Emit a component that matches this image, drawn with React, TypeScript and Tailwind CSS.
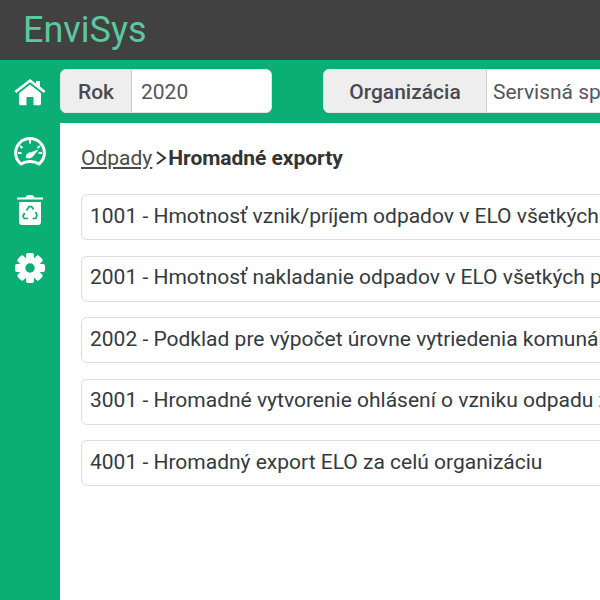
import React from "react";

const rows = [
  "1001 - Hmotnosť vznik/príjem odpadov v ELO všetkých prevádzok",
  "2001 - Hmotnosť nakladanie odpadov v ELO všetkých prevádzok",
  "2002 - Podklad pre výpočet úrovne vytriedenia komunálneho odpadu",
  "3001 - Hromadné vytvorenie ohlásení o vzniku odpadu za prevádzky",
  "4001 - Hromadný export ELO za celú organizáciu",
];

function Home() {
  return (
    <svg width="32" height="28" viewBox="0 0 32 28" fill="#fff">
      <path d="M16 1 L22 5.6 V3 H26 V8.6 L31.5 13 L29.8 15 L16 4.2 L2.2 15 L.5 13 Z" />
      <path d="M16 6.6 L27 15.2 V25.5 C27 26.6 26.2 27.3 25 27.3 H19.5 V19 H12.5 V27.3 H7 C5.8 27.3 5 26.6 5 25.5 V15.2 Z" />
    </svg>
  );
}

function Gauge() {
  return (
    <svg width="32" height="30" viewBox="0 0 32 30" fill="none" stroke="#fff">
      <path d="M7 27 C3.5 24 1.6 20.5 1.6 16 C1.6 8 8 1.6 16 1.6 C24 1.6 30.4 8 30.4 16 C30.4 20.5 28.5 24 25 27 C22.5 25.4 19.5 24.6 16 24.6 C12.5 24.6 9.5 25.4 7 27 Z" strokeWidth="3" strokeLinejoin="round" />
      <path d="M16 3 V6.5 M6 9 L8.6 11 M26 9 L23.4 11 M4 16 H7.5 M24.5 16 H28" strokeWidth="2" />
      <path d="M12 20 C12 17 14.5 15.5 17 15.5 L24 13 L19 19 C18.6 21 12 22 12 20 Z" fill="#fff" strokeWidth="0.5" strokeLinejoin="round" />
    </svg>
  );
}

function Bin() {
  return (
    <svg width="28" height="32" viewBox="0 0 28 32" fill="#fff">
      <path d="M1 3.4 H9.5 C10 1.6 11.5 1 14 1 C16.5 1 18 1.6 18.5 3.4 H27 V5.6 H1 Z" />
      <path d="M3 8 H25 V28 C25 29.8 23.8 31 22 31 H6 C4.2 31 3 29.8 3 28 Z" />
      <g fill="none" stroke="#0bae75" strokeWidth="1.7">
        <path d="M10.5 16.5 L13 12.6 H15.6 L17.5 15.5" />
        <path d="M19.6 18 L21 21.5 L19.6 24.5 H16.5" />
        <path d="M12 24.5 H8.2 L7 22 L8.6 19" />
      </g>
    </svg>
  );
}

function Gear() {
  return (
    <svg width="32" height="32" viewBox="0 0 32 32">
      <g fill="#fff">
        <circle cx="16" cy="16" r="10.5" />
        <rect x="12" y="1" width="8" height="30" rx="2" />
        <rect x="12" y="1" width="8" height="30" rx="2" transform="rotate(45 16 16)" />
        <rect x="12" y="1" width="8" height="30" rx="2" transform="rotate(90 16 16)" />
        <rect x="12" y="1" width="8" height="30" rx="2" transform="rotate(135 16 16)" />
      </g>
      <circle cx="16" cy="16" r="4.7" fill="#0bae75" />
    </svg>
  );
}

function Group({ label, value, labelClass, valueClass }: { label: string; value: string; labelClass: string; valueClass: string }) {
  return (
    <div className="flex h-[44px] shrink-0 rounded-[6px] overflow-hidden bg-white border border-[#e4e4e4]">
      <div className={`flex items-center justify-center bg-[#eeeeee] border-r border-[#cccccc] pt-[3px] font-medium text-[#4a4a50] text-[21px] ${labelClass}`}>{label}</div>
      <div className={`flex items-center bg-white pt-[3px] text-[#55555c] whitespace-nowrap text-[21px] ${valueClass}`}>{value}</div>
    </div>
  );
}

export default function App() {
  return (
    <div className="w-[600px] h-[600px] overflow-hidden flex flex-col bg-white font-['Roboto',sans-serif]">
      <header className="h-[60px] shrink-0 bg-[#414141] flex items-center pl-[23px]">
        <span className="text-[36px] leading-none text-[#5bc8a0]">EnviSys</span>
      </header>
      <div className="flex flex-1 min-h-0">
        <aside className="w-[60px] shrink-0 bg-[#0bae75] flex flex-col items-center pt-[18px]">
          <div className="h-[28px] flex items-center"><Home /></div>
          <div className="h-[30px] mt-[31px] flex items-center"><Gauge /></div>
          <div className="h-[32px] mt-[27px] flex items-center"><Bin /></div>
          <div className="h-[32px] mt-[26px] flex items-center"><Gear /></div>
        </aside>
        <main className="flex-1 min-w-0 flex flex-col">
          <div className="h-[63px] shrink-0 bg-[#0bae75] flex items-start pt-[9px] gap-[51px] overflow-hidden">
            <Group label="Rok" value="2020" labelClass="w-[71px]" valueClass="w-[139px] pl-[9px]" />
            <Group label="Organizácia" value="Servisná spoločnosť" labelClass="w-[163px]" valueClass="w-[300px] pl-[6px]" />
          </div>
          <div className="flex-1 min-h-0 pl-[21px] pt-[23px]">
            <nav className="flex items-center h-[24px] text-[21px] leading-none text-[#444444]">
              <span className="underline underline-offset-2 text-[#4a4a4a]">Odpady</span>
              <svg width="12" height="16" viewBox="0 0 12 16" fill="none" stroke="#333" strokeWidth="2" className="ml-[3px] mr-[1px]"><path d="M2 2 L10 8 L2 14" /></svg>
              <span className="font-bold text-[#333333] tracking-[-0.05px]">Hromadné exporty</span>
            </nav>
            <ul className="mt-[24px] flex flex-col gap-[15.5px] w-[700px]">
              {rows.map((r) => (
                <li key={r} className="h-[46px] flex items-center pl-[8px] pb-[1px] rounded-[6px] border border-[#dddddd] bg-white text-[21px] text-[#333a40] whitespace-nowrap overflow-hidden">{r}</li>
              ))}
            </ul>
          </div>
        </main>
      </div>
    </div>
  );
}
